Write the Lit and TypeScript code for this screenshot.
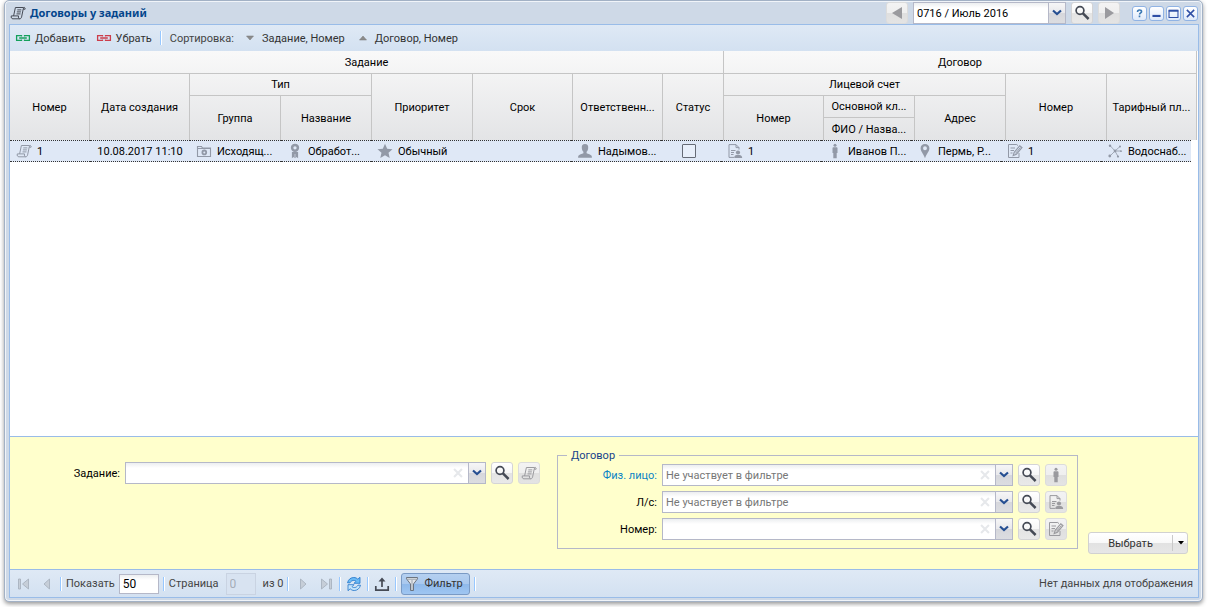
import { LitElement, html, svg, css, nothing } from "lit";
import { customElement, state } from "lit/decorators.js";

const scroll = svg`<path d="M3.600 10.900 5.400 2.500h8.200c1.300 0 1.800.7 1.500 1.700h-1.900l-1.600 7.700c-.3 1.300-.9 1.900-2 1.900H3c-1.500 0-2.100-1.100-1.700-2.900h7.200c-.2 1.700.1 2.600 1.100 2.900M13.200 4.200c.1-.9.400-1.500 1.100-1.700M7.300 4.900h4M6.900 6.900h4M6.500 8.900h4" fill="none" stroke="currentColor"/>`;
const chain = svg`<path d="M6.500 9.600v.7H1.600V5.700h4.900v.7M9.500 6.400v-.7h4.900v4.600H9.500v-.7M4.200 8h7.600" fill="none" stroke="currentColor" stroke-width="1.300"/>`;

const icons = {
  scroll,
  chain,
  search: svg`<circle cx="6" cy="5.500" r="3.900" fill="none" stroke="currentColor" stroke-width="1.700"/><path d="M8.900 8.400l5.700 5.600" stroke="currentColor" stroke-width="2.500"/>`,
  prev: svg`<path d="M13 2v12L3 8z" fill="currentColor"/>`,
  next: svg`<path d="M4 2v12l9-6z" fill="currentColor"/>`,
  down: svg`<path d="M4.500 6h7L8 10z" fill="#8c8c8c" stroke="#777" stroke-width=".5"/>`,
  up: svg`<path d="M4.500 10h7L8 6z" fill="#8c8c8c" stroke="#777" stroke-width=".5"/>`,
  chevron: svg`<path d="M4 5.500L8 9l4-3.500" fill="none" stroke="#264f92" stroke-width="2.200"/>`,
  clear: svg`<path d="M3.500 3.500l9 9M12.500 3.500l-9 9" stroke="#e6e8eb" stroke-width="2.400"/>`,
  camera: svg`<path d="M1.500 13.500v-10h4l1 1.500h8v8.500z" fill="none" stroke="currentColor" stroke-width="1.100"/><path d="M1.500 5.500h13" stroke="currentColor"/><circle cx="8.300" cy="9.400" r="1.900" fill="none" stroke="currentColor" stroke-width="1.800"/>`,
  medal: svg`<circle cx="8" cy="4.800" r="2.900" fill="none" stroke="currentColor" stroke-width="2.500"/><path d="M4.900 9h6.200v6.300l-1.600-1.200-1.200 1.200V11h-.6v4.300l-1.200-1.200-1.600 1.200z" fill="currentColor"/>`,
  star: svg`<path d="M8 .7l2.200 5 5.300.5-4 3.600 1.200 5.300L8 12.300l-4.700 2.800 1.200-5.300L.5 6.200l5.300-.5z" fill="currentColor"/>`,
  person: svg`<path d="M8 1c2.400 0 3.400 1.700 3.200 3.900C11 7 10.300 8 9.600 8.700v1.500c1.500.9 4.200 1.100 5 2.500.3.600.3 1.200.3 2H1.100c0-.8 0-1.400.3-2 .8-1.400 3.500-1.600 5-2.500V8.700C5.700 8 5 7 4.800 4.900 4.600 2.700 5.600 1 8 1z" fill="currentColor"/>`,
  account: svg`<path d="M7 14.400H2V1.600h7l3 3v2M9 1.600v3h3M4 7.500h4.500M4 9.500h3M4 11.500h2.500" fill="none" stroke="currentColor"/><circle cx="11" cy="9.500" r="2.100" fill="currentColor"/><path d="M7.200 15c0-2.400 1.400-2.900 3.800-2.900s4.200.5 4.200 2.900z" fill="currentColor"/>`,
  man: svg`<circle cx="8" cy="2.300" r="1.500" fill="currentColor"/><path d="M6.700 4.300h2.600c.8 0 1.200.4 1.200 1V10h-.8v5.300H6.300V10h-.8V5.300c0-.6.400-1 1.200-1z" fill="currentColor"/>`,
  pin: svg`<path fill-rule="evenodd" d="M8 1c2.700 0 4.400 1.900 4.400 4.300C12.400 8.300 9.800 10.600 8 15.200 6.200 10.600 3.600 8.300 3.600 5.300 3.600 2.900 5.300 1 8 1zm0 2.300a1.900 1.900 0 100 3.900 1.900 1.900 0 000-3.900z" fill="currentColor"/>`,
  contract: svg`<path d="M12 10v4.500H1.500v-13h8.300l1.200 1.200M3.500 5h4.500M3.500 7.500h3.500M3.500 10h2" fill="none" stroke="currentColor"/><path d="M6.200 12.500l1-3.200 5.600-6.500 2.200 1.800-5.600 6.600z" fill="none" stroke="currentColor" stroke-width="1.100"/><path d="M8.300 10.500l5.200-6" stroke="currentColor"/>`,
  network: svg`<path d="M3 2.500l5 5.500 5-4.500M8 8l-5 5M8 8l3 5.500M8 8h6" fill="none" stroke="currentColor" stroke-width=".8"/><g fill="currentColor"><circle cx="3" cy="2.700" r="1.200"/><circle cx="13" cy="3.400" r="1"/><circle cx="2.800" cy="13" r="1.400"/><circle cx="11" cy="13.600" r="1.100"/><circle cx="14" cy="8.200" r=".9"/><circle cx="8" cy="8" r="1.400"/></g>`,
  first: svg`<path d="M2.500 3h2v10h-2zM12.500 3v10L6.500 8z" fill="#c6ced8" stroke="#a3adba" stroke-width=".8"/>`,
  back: svg`<path d="M10.500 3v10L5 8z" fill="#c6ced8" stroke="#a3adba" stroke-width=".8"/>`,
  forward: svg`<path d="M5.500 3v10L11 8z" fill="#c6ced8" stroke="#a3adba" stroke-width=".8"/>`,
  last: svg`<path d="M11.500 3h2v10h-2zM3.500 3v10l6-5z" fill="#c6ced8" stroke="#a3adba" stroke-width=".8"/>`,
  refresh: svg`<path d="M1.500 6.800C2.300 3.200 5 1.500 7.800 1.500c1.800 0 3 .7 4 1.700L14 1.300v6H8l2-2C8.300 3.800 5.500 4.200 4 6.800z" fill="#6bbaf5" stroke="#1f74c9" stroke-width=".8"/><path d="M14.500 9.200c-.8 3.600-3.500 5.300-6.300 5.300-1.800 0-3-.7-4-1.700L2 14.700v-6h6l-2 2c1.700 1.500 4.500 1.100 6-1.500z" fill="#c3e4fc" stroke="#1f74c9" stroke-width=".8"/>`,
  upload: svg`<path d="M1.800 10v4.200h12.400V10M8 11V3" fill="none" stroke="currentColor" stroke-width="1.700"/><path d="M4.500 5.500L8 1.500l3.500 4z" fill="currentColor"/>`,
  funnel: svg`<path d="M2.500 1.500h11v1.300L9.500 8v6.500h-3V8l-4-5.200z" fill="#e3e6ea" stroke="#6b7480"/><path d="M3 3.200h10M8 4v10" stroke="#9aa2ac"/>`,
  caret: svg`<path d="M5 6h6L8 9.500z" fill="#000"/>`,
  help: svg`<path d="M5.600 6c0-1.600 1-2.300 2.400-2.300s2.500.7 2.500 2c0 1.500-2.400 1.500-2.400 3.500M8 10.600v2" fill="none" stroke="#3d7ab5" stroke-width="2"/>`,
  minimize: svg`<path d="M3 11h10" stroke="currentColor" stroke-width="2.600"/>`,
  maximize: svg`<path d="M2.500 4.500h11v8.500h-11z" fill="none" stroke="currentColor" stroke-width="1.300"/><path d="M2 4.500h12" stroke="currentColor" stroke-width="2.400"/>`,
  close: svg`<path d="M3.500 3.500l9 9M12.500 3.500l-9 9" stroke="currentColor" stroke-width="1.900"/>`,
};
type IconName = keyof typeof icons;

const icon = (name: IconName, tone = "") =>
  html`<svg class="icon ${tone}" viewBox="0 0 16 16" aria-hidden="true">${icons[name]}</svg>`;

interface Head {
  text: string;
  cols?: number;
  rows?: number;
}

const headWidths = [80, 100, 91, 91, 101, 100, 90, 61, 100, 91, 91, 101, 90];
const cellWidths = [80, 100, 91, 90, 100, 100, 90, 60, 100, 90, 90, 100, 90];

const headRows: Head[][] = [
  [{ text: "Задание", cols: 8 }, { text: "Договор", cols: 5 }],
  [
    { text: "Номер", rows: 3 },
    { text: "Дата создания", rows: 3 },
    { text: "Тип", cols: 2 },
    { text: "Приоритет", rows: 3 },
    { text: "Срок", rows: 3 },
    { text: "Ответственн...", rows: 3 },
    { text: "Статус", rows: 3 },
    { text: "Лицевой счет", cols: 3 },
    { text: "Номер", rows: 3 },
    { text: "Тарифный пл...", rows: 3 },
  ],
  [
    { text: "Группа", rows: 2 },
    { text: "Название", rows: 2 },
    { text: "Номер", rows: 2 },
    { text: "Основной кл..." },
    { text: "Адрес", rows: 2 },
  ],
  [{ text: "ФИО / Назва..." }],
];

const record: { icon?: IconName; text?: string; check?: boolean }[] = [
  { icon: "scroll", text: "1" },
  { text: "10.08.2017 11:10" },
  { icon: "camera", text: "Исходящ..." },
  { icon: "medal", text: "Обработ..." },
  { icon: "star", text: "Обычный" },
  {},
  { icon: "person", text: "Надымов..." },
  { check: true },
  { icon: "account", text: "1" },
  { icon: "man", text: "Иванов П..." },
  { icon: "pin", text: "Пермь, Р..." },
  { icon: "contract", text: "1" },
  { icon: "network", text: "Водоснаб..." },
];

const columns = (widths: number[]) => {
  const total = widths.reduce((a, b) => a + b, 0);
  return html`<colgroup>
    ${widths.map((w) => html`<col style="width:${(w / total) * 100}%" />`)}
  </colgroup>`;
};

@customElement("app-root")
export class AppRoot extends LitElement {
  @state() private filterShown = true;

  static styles = css`
    :host {
      display: flex;
      box-sizing: border-box;
      height: 100vh;
      padding: 0 5px 5px 4px;
      background: #fff;
      color: #000;
      font: 11px/17px Roboto, Tahoma, sans-serif;
    }
    *,
    *::before {
      box-sizing: border-box;
    }
    button,
    input,
    select {
      margin: 0;
      padding: 0;
      border: 0;
      border-radius: 0;
      background: none;
      color: inherit;
      font: inherit;
      outline: none;
    }
    .icon {
      flex: none;
      display: block;
      width: 16px;
      height: 16px;
    }
    .green { color: #14a05c; }
    .red { color: #cc3d4b; }
    .dark { color: #454a55; }
    .gray { color: #9299a7; }
    .window {
      flex: 1;
      min-width: 0;
      display: flex;
      flex-direction: column;
      padding: 0 3px 3px 4px;
      border: 1px solid #a2b1c5;
      border-radius: 5px;
      background: #ced9e7;
      box-shadow: inset 0 0 0 1px #f0f4f9, 0 2px 4px #999;
    }
    .titlebar {
      display: flex;
      align-items: center;
      gap: 5px;
      height: 23px;
      padding: 1px 1px 0 1px;
    }
    .title {
      flex: 1;
      display: flex;
      align-items: center;
      gap: 4px;
      margin: 0;
      color: #04468c;
      font: bold 11px/16px "Noto Sans", Tahoma, sans-serif;
    }
    .box {
      flex: none;
      display: grid;
      place-items: center;
      width: 22px;
      height: 22px;
      border: 1px solid #d4d4d6;
      border-radius: 3px;
      background: linear-gradient(#fff, #f7f7f7 48%, #e4e4e4 52%, #e9e9e9);
      color: #454545;
    }
    .box.muted {
      border-color: #dcdcdc;
      background: linear-gradient(#f3f3f3, #efefef 48%, #dfdfdf 52%, #e4e4e4);
      color: #9a9a9e;
    }
    .tools {
      display: flex;
      gap: 2px;
      margin-left: 7px;
    }
    .tool {
      display: grid;
      place-items: center;
      width: 15px;
      height: 15px;
      border: 1px solid #90b3e4;
      border-radius: 3px;
      background: linear-gradient(#fff, #dfeafa);
      color: #2f4fa5;
    }
    .tool .icon {
      width: 13px;
      height: 13px;
    }
    .panel {
      flex: 1;
      min-height: 0;
      display: flex;
      flex-direction: column;
      border: 1px solid #99bce8;
      background: #fff;
    }
    .bar {
      display: flex;
      align-items: center;
      background: linear-gradient(#dfe9f5, #d3e1f1);
      color: #333;
    }
    .bar.top {
      height: 26px;
      padding-left: 5px;
    }
    .action {
      display: flex;
      align-items: center;
      gap: 4px;
    }
    .action + .action {
      margin-left: 10px;
    }
    .sep {
      flex: none;
      width: 2px;
      height: 14px;
      border-left: 1px solid #98c8ff;
      border-right: 1px solid #fff;
    }
    .top .sep {
      margin: 0 8px;
    }
    .sortlabel {
      margin-right: 8px;
      color: #444;
    }
    table {
      table-layout: fixed;
      border-collapse: separate;
      border-spacing: 0;
    }
    .head {
      width: calc(100% - 1px);
      background: linear-gradient(#f9f9f9, #e3e4e6);
    }
    .head th {
      height: 22px;
      padding: 0 4px;
      border-right: 1px solid #c5c5c5;
      overflow: hidden;
      white-space: nowrap;
      font-weight: normal;
      text-align: center;
    }
    .head th.group {
      border-bottom: 1px solid #c5c5c5;
    }
    .head tr:first-child th {
      height: 23px;
    }
    .rows {
      width: calc(100% - 7px);
    }
    .rows td {
      height: 22px;
      padding: 0 3px 0 6px;
      border-top: 1px dotted #333;
      border-bottom: 1px dotted #333;
      background: #dfe8f6;
      overflow: hidden;
      white-space: nowrap;
    }
    .cell {
      display: flex;
      align-items: center;
      gap: 5px;
    }
    .cell.centered {
      justify-content: center;
      gap: 0;
      padding-right: 3px;
    }
    .check {
      appearance: none;
      display: block;
      width: 14px;
      height: 14px;
      margin-right: 4px;
      border: 1px solid #666b76;
      border-radius: 1px;
      background: #e8effa;
    }
    .grid {
      flex: 1;
      min-height: 0;
      overflow: hidden;
    }
    .filter {
      display: grid;
      grid-template-columns: minmax(0, 547fr) minmax(0, 521fr) 120px;
      height: 133px;
      border-top: 1px solid #99bce8;
      background: #ffffcc;
    }
    .field {
      display: flex;
      align-items: center;
      gap: 5px;
    }
    .field label {
      flex: none;
      text-align: right;
    }
    .task {
      padding: 25px 17px 0 0;
      align-self: start;
    }
    .task label {
      width: 110px;
    }
    .combo {
      flex: 1;
      min-width: 0;
      display: flex;
      height: 22px;
      border: 1px solid #b5b8c8;
      background: linear-gradient(#eceef0, #fff 5px);
    }
    .combo input {
      flex: 1;
      min-width: 0;
      padding: 0 3px;
    }
    .combo input::placeholder {
      color: #777;
      opacity: 1;
    }
    .wipe {
      flex: none;
      width: 20px;
      display: grid;
      place-items: center;
    }
    .wipe .icon {
      width: 14px;
      height: 14px;
    }
    .trigger {
      flex: none;
      display: grid;
      place-items: center;
      width: 17px;
      border-left: 1px solid #b5b8c8;
      background: linear-gradient(#f6f6f7, #e9e9ec 48%, #d6d7dc 52%, #dcdde1);
    }
    .period {
      position: relative;
      flex: none;
      width: 153px;
    }
    .period select {
      appearance: none;
      width: 100%;
      padding: 0 20px 0 3px;
    }
    .period .trigger {
      position: absolute;
      inset: 0 0 0 auto;
      pointer-events: none;
    }
    fieldset {
      align-self: start;
      display: flex;
      flex-direction: column;
      gap: 5px;
      min-width: 0;
      margin: 10px 0 0;
      padding: 1px 10px 8px 0;
      border: 1px solid #b5b8c8;
    }
    legend {
      height: 16px;
      margin-left: 9px;
      padding: 0 4px;
      color: #15428b;
    }
    fieldset label {
      width: 99px;
    }
    .link {
      color: #0a84c6;
    }
    .choose {
      align-self: end;
      display: flex;
      align-items: center;
      width: 100px;
      height: 22px;
      margin: 0 0 15px 10px;
      border: 1px solid #d1d1d1;
      border-radius: 3px;
      background: linear-gradient(#fff, #f9f9f9 48%, #e2e2e2 52%, #e7e7e7);
      color: #333;
    }
    .choose .main {
      flex: 1;
    }
    .choose .more {
      display: grid;
      place-items: center;
      width: 15px;
      height: 16px;
      border-left: 1px solid #c9c9c9;
    }
    .bar.bottom {
      height: 28px;
      border-top: 1px solid #99bce8;
      padding: 0 5px 0 4px;
      gap: 4px;
      color: #444;
    }
    .nav {
      display: grid;
      place-items: center;
      width: 19px;
      height: 22px;
    }
    .nav.live {
      width: 18px;
    }
    .num {
      height: 20px;
      padding: 0 3px;
      border: 1px solid #b5b8c8;
      background: linear-gradient(#eceef0, #fff 5px);
      color: #000;
      font-size: 12px;
    }
    .num.size {
      width: 40px;
    }
    .num.page {
      width: 30px;
      height: 22px;
      margin: 0 3px;
      border-color: #c9d3e2;
      background: #d8e3f1;
      color: #a5adb8;
    }
    .toggle {
      display: flex;
      align-items: center;
      gap: 4px;
      height: 22px;
      padding: 0 6px 0 2px;
      border: 1px solid #7a9ac4;
      border-radius: 3px;
      background: linear-gradient(#b5d0f0, #a9c8ee 48%, #8fb9ea 52%, #9fc6f2);
      color: #333;
    }
    .status {
      margin-left: auto;
    }
  `;

  private combo(id: string, placeholder = "") {
    return html`<span class="combo">
      <input id=${id} type="text" placeholder=${placeholder} />
      <button class="wipe" aria-label="Очистить">${icon("clear")}</button>
      <button class="trigger" aria-label="Открыть список">${icon("chevron")}</button>
    </span>`;
  }

  private field(id: string, label: string, picture: IconName, placeholder = "", tone = "") {
    return html`<div class="field">
      <label class=${tone} for=${id}>${label}</label>
      ${this.combo(id, placeholder)}
      <button class="box" aria-label="Найти">${icon("search", "dark")}</button>
      <button class="box muted" aria-label="Открыть">${icon(picture)}</button>
    </div>`;
  }

  private nav(name: IconName, label: string, live = false) {
    return html`<button class="nav ${live ? "live" : ""}" aria-label=${label}>
      ${icon(name, live ? "dark" : "")}
    </button>`;
  }

  private renderTitle() {
    return html`<header class="titlebar">
      <h1 class="title">${icon("scroll", "dark")}Договоры у заданий</h1>
      <button class="box muted" aria-label="Предыдущий период">${icon("prev")}</button>
      <span class="combo period">
        <select aria-label="Период"><option>0716 / Июль 2016</option></select>
        <span class="trigger">${icon("chevron")}</span>
      </span>
      <button class="box" aria-label="Найти период">${icon("search", "dark")}</button>
      <button class="box muted" aria-label="Следующий период">${icon("next")}</button>
      <div class="tools">
        <button class="tool" aria-label="Справка">${icon("help")}</button>
        <button class="tool" aria-label="Свернуть">${icon("minimize")}</button>
        <button class="tool" aria-label="Развернуть">${icon("maximize")}</button>
        <button class="tool" aria-label="Закрыть">${icon("close")}</button>
      </div>
    </header>`;
  }

  private renderGrid() {
    return html`<div class="grid">
      <table class="head">
        ${columns(headWidths)}
        <thead>
          ${headRows.map(
            (row, depth) => html`<tr>
              ${row.map(
                (h) => html`<th
                  class=${depth + (h.rows ?? 1) < headRows.length ? "group" : ""}
                  colspan=${h.cols ?? 1}
                  rowspan=${h.rows ?? 1}
                >${h.text}</th>`,
              )}
            </tr>`,
          )}
        </thead>
      </table>
      <table class="rows" aria-label="Договоры">
        ${columns(cellWidths)}
        <tbody>
          <tr>
            ${record.map(
              (c) => html`<td>
                <div class="cell ${c.icon ? "" : "centered"}">
                  ${c.icon ? icon(c.icon, "gray") : nothing}
                  ${c.check ? html`<input class="check" type="checkbox" aria-label="Статус" />` : nothing}
                  ${c.text ? html`<span>${c.text}</span>` : nothing}
                </div>
              </td>`,
            )}
          </tr>
        </tbody>
      </table>
    </div>`;
  }

  private renderFilter() {
    return html`<section class="filter">
      <div class="task">${this.field("task", "Задание:", "scroll")}</div>
      <fieldset>
        <legend>Договор</legend>
        ${this.field("person", "Физ. лицо:", "man", "Не участвует в фильтре", "link")}
        ${this.field("account", "Л/с:", "account", "Не участвует в фильтре")}
        ${this.field("number", "Номер:", "contract")}
      </fieldset>
      <div class="choose">
        <button class="main">Выбрать</button>
        <button class="more" aria-label="Ещё">${icon("caret")}</button>
      </div>
    </section>`;
  }

  render() {
    const sep = html`<span class="sep"></span>`;
    return html`<main class="window">
      ${this.renderTitle()}
      <div class="panel">
        <div class="bar top">
          <button class="action">${icon("chain", "green")}Добавить</button>
          <button class="action">${icon("chain", "red")}Убрать</button>
          ${sep}
          <span class="sortlabel">Сортировка:</span>
          <button class="action">${icon("down")}Задание, Номер</button>
          <button class="action">${icon("up")}Договор, Номер</button>
        </div>
        ${this.renderGrid()} ${this.filterShown ? this.renderFilter() : nothing}
        <div class="bar bottom">
          ${this.nav("first", "Первая страница")} ${this.nav("back", "Предыдущая страница")} ${sep}
          <label for="size">Показать</label>
          <input id="size" class="num size" type="text" value="50" />
          ${sep}
          <label for="page">Страница</label>
          <input id="page" class="num page" type="text" value="0" disabled />
          <span>из 0</span>
          ${sep} ${this.nav("forward", "Следующая страница")} ${this.nav("last", "Последняя страница")}
          ${sep} ${this.nav("refresh", "Обновить", true)} ${sep}
          ${this.nav("upload", "Выгрузить", true)} ${sep}
          <button
            class="toggle"
            aria-pressed=${this.filterShown}
            @click=${() => (this.filterShown = !this.filterShown)}
          >${icon("funnel")}Фильтр</button>
          ${sep}
          <span class="status">Нет данных для отображения</span>
        </div>
      </div>
    </main>`;
  }
}
